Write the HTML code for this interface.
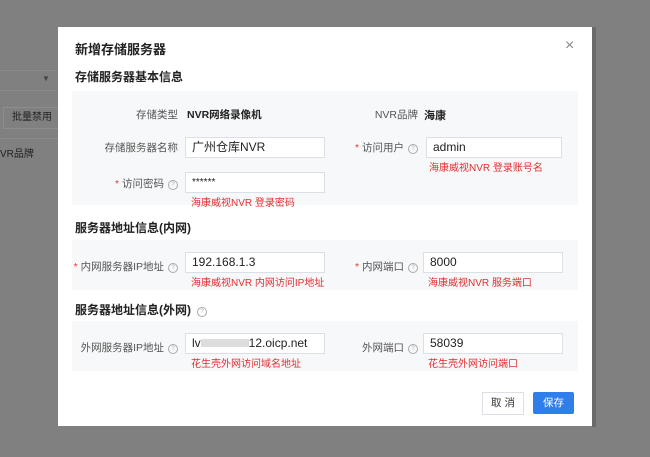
<!DOCTYPE html>
<html><head><meta charset="utf-8"><style>
body{margin:0;width:650px;height:457px;background:#808080;position:relative;overflow:hidden;font-family:"Liberation Sans","Noto Sans CJK SC",sans-serif;font-size:11px;color:#333}
.a{position:absolute;white-space:nowrap}
.bg1{position:absolute;left:0;top:70px;width:58px;height:20px;border-bottom:1px solid #777}
.m{position:absolute;left:58px;top:27px;width:534px;height:399px;background:#fff}
.p{position:absolute;background:#f7f8fa}
.in{position:absolute;height:21px;border:1px solid #dcdfe6;background:#fff;box-sizing:border-box;font-size:12px;line-height:19px;padding-left:6px;color:#222}
.l{position:absolute;text-align:right;color:#555;font-size:10.5px}
.r{color:#e03030;font-size:10px;position:absolute}
.q{display:inline-block;width:8px;height:8px;border:1px solid #aaa;border-radius:50%;font-size:6px;line-height:8px;text-align:center;color:#aaa;margin-left:4px;vertical-align:1px}
.s{color:#e04040}
h{position:absolute;font-weight:bold;font-size:12px;color:#222}
</style></head><body>
<div class="a" style="left:0;top:70px;width:57px;height:19px;border-top:1px solid #8a8a8a;border-bottom:1px solid #8a8a8a"></div>
<div class="a" style="left:42px;top:74px;color:#444;font-size:8px">▼</div>
<div class="a" style="left:3px;top:107px;width:52px;height:20px;border:1px solid #8d8d8d;font-size:10px;line-height:20px;padding-left:8px;color:#222">批量禁用</div>
<div class="a" style="left:0;top:145px;font-size:10px;color:#222">VR品牌</div>
<div class="a" style="left:0;top:138px;width:58px;border-top:1px solid #8a8a8a"></div>
<div class="a" style="left:592px;top:27px;width:4px;height:400px;background:#6a6a6a"></div>
<div class="m">
<h style="left:17px;top:12px;font-size:13px">新增存储服务器</h>
<div class="a" style="left:507px;top:10px;font-size:16px;color:#888">×</div>
<h style="left:17px;top:41px">存储服务器基本信息</h>
<div class="p" style="left:14px;top:64px;width:506px;height:114px"></div>
<div class="l" style="left:20px;top:80px;width:100px">存储类型</div>
<div class="a" style="left:129px;top:80px;font-size:10.5px;color:#222;font-weight:bold">NVR网络录像机</div>
<div class="l" style="left:260px;top:80px;width:100px">NVR品牌</div>
<div class="a" style="left:366px;top:80px;font-weight:bold;color:#222">海康</div>
<div class="l" style="left:20px;top:113px;width:100px">存储服务器名称</div>
<div class="in" style="left:127px;top:110px;width:140px">广州仓库NVR</div>
<div class="l" style="left:260px;top:113px;width:100px"><span class="s">* </span>访问用户<span class="q">?</span></div>
<div class="in" style="left:368px;top:110px;width:136px">admin</div>
<div class="r" style="left:371px;top:132px">海康威视NVR 登录账号名</div>
<div class="l" style="left:20px;top:149px;width:100px"><span class="s">* </span>访问密码<span class="q">?</span></div>
<div class="in" style="left:127px;top:145px;width:140px;font-size:10px">******</div>
<div class="r" style="left:133px;top:167px">海康威视NVR 登录密码</div>
<h style="left:17px;top:192px">服务器地址信息(内网)</h>
<div class="p" style="left:14px;top:213px;width:506px;height:50px"></div>
<div class="l" style="left:10px;top:232px;width:110px"><span class="s">* </span>内网服务器IP地址<span class="q">?</span></div>
<div class="in" style="left:127px;top:225px;width:140px">192.168.1.3</div>
<div class="r" style="left:133px;top:247px">海康威视NVR 内网访问IP地址</div>
<div class="l" style="left:260px;top:232px;width:100px"><span class="s">* </span>内网端口<span class="q">?</span></div>
<div class="in" style="left:365px;top:225px;width:140px">8000</div>
<div class="r" style="left:370px;top:247px">海康威视NVR 服务端口</div>
<h style="left:17px;top:274px">服务器地址信息(外网)<span class="q" style="font-weight:normal;margin-left:6px">?</span></h>
<div class="p" style="left:14px;top:294px;width:506px;height:50px"></div>
<div class="l" style="left:10px;top:313px;width:110px">外网服务器IP地址<span class="q">?</span></div>
<div class="in" style="left:127px;top:306px;width:140px">lv<span style="display:inline-block;width:48px;height:8px;background:#ddd;vertical-align:0"></span>12.oicp.net</div>
<div class="r" style="left:133px;top:328px">花生壳外网访问域名地址</div>
<div class="l" style="left:260px;top:313px;width:100px">外网端口<span class="q">?</span></div>
<div class="in" style="left:365px;top:306px;width:140px">58039</div>
<div class="r" style="left:370px;top:328px">花生壳外网访问端口</div>
<div class="a" style="left:424px;top:365px;width:40px;height:21px;border:1px solid #dcdfe6;text-align:center;line-height:21px;font-size:10.5px;color:#333">取 消</div>
<div class="a" style="left:475px;top:365px;width:41px;height:22px;background:#2f7eea;color:#fff;text-align:center;line-height:22px;font-size:10.5px;border-radius:2px">保存</div>
</div>
</body></html>
